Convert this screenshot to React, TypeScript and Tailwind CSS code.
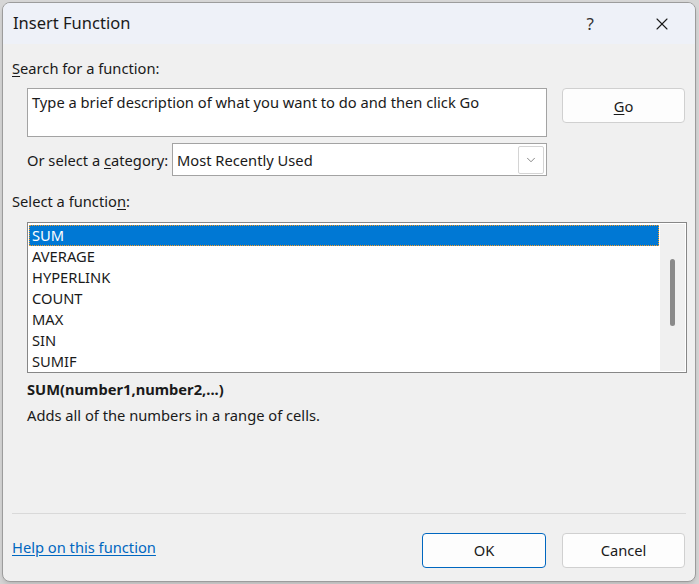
import { ChevronDown, X } from "lucide-react";

const functions = ["SUM", "AVERAGE", "HYPERLINK", "COUNT", "MAX", "SIN", "SUMIF"];

export default function App() {
  const selected = "SUM";

  return (
    <div className="w-[699px] h-[584px] bg-[#d6d6d6] p-[2px] font-['Noto_Sans',sans-serif] text-[14.7px] text-[#1a1a1a]">
      <div className="w-[694px] h-[580px] rounded-[8px] border border-[#9c9c9c] bg-[#f0f0f0] overflow-hidden flex flex-col shadow-md">
        {/* title bar */}
        <div className="h-[41px] bg-[#eef1f8] flex items-center pl-[10px] pr-[23px]">
          <span className="text-[16.5px] text-[#1a1a1a]">Insert Function</span>
          <div className="ml-auto flex items-center gap-[58px]">
            <span className="text-[17px] text-[#333]">?</span>
            <X size={20} strokeWidth={1.3} className="text-[#1a1a1a]" />
          </div>
        </div>

        {/* body */}
        <div className="flex-1 flex flex-col pl-[9px] pr-[8px]">
          <div className="mt-[14px] leading-[20px]">
            <span className="underline underline-offset-2">S</span>earch for a function:
          </div>

          <div className="mt-[10px] flex pl-[15px]">
            <div className="w-[520px] h-[49px] bg-white border border-[#a3a3a3] px-[4px] pt-[3px] leading-[20px]">
              Type a brief description of what you want to do and then click Go
            </div>
            <button className="ml-[15px] w-[123px] h-[35px] rounded-[4px] border border-[#d0d0d0] bg-[#fdfdfd] leading-[20px]">
              <span className="underline underline-offset-2">G</span>o
            </button>
          </div>

          <div className="mt-[6px] flex items-center pl-[15px]">
            <span className="w-[145px] leading-[20px]">
              Or select a <span className="underline underline-offset-2">c</span>ategory:
            </span>
            <div className="w-[375px] h-[33px] bg-white border border-[#a3a3a3] flex items-center pl-[4px] pr-[2px]">
              <span className="leading-[20px]">Most Recently Used</span>
              <div className="ml-auto w-[26px] h-[28px] rounded-[2px] border border-[#d4d4d4] flex items-center justify-center">
                <ChevronDown size={14} strokeWidth={1.2} className="text-[#555]" />
              </div>
            </div>
          </div>

          <div className="mt-[15px] leading-[20px]">
            Select a functio<span className="underline underline-offset-2">n</span>:
          </div>

          <div className="mt-[11px] ml-[15px] w-[660px] h-[151px] bg-white border border-[#878787] flex p-[1px]">
            <ul className="flex-1 pt-[1px]">
              {functions.map((f) => (
                <li
                  key={f}
                  className={
                    f === selected
                      ? "h-[21px] leading-[19px] px-[2px] mr-[1px] bg-[#0078d4] text-white border border-dotted border-[#f59a23]"
                      : "h-[21px] leading-[21px] px-[3px]"
                  }
                >
                  {f}
                </li>
              ))}
            </ul>
            <div className="w-[25px] h-full bg-[#f0f0f0] flex justify-center pt-[35px]">
              <div className="w-[5px] h-[67px] rounded-full bg-[#8a8a8a]" />
            </div>
          </div>

          <div className="mt-[6px] ml-[15px] leading-[20px] font-bold">SUM(number1,number2,...)</div>
          <div className="mt-[6px] ml-[15px] leading-[20px]">Adds all of the numbers in a range of cells.</div>

          <div className="mt-auto border-t border-[#d9d9d9] mr-[1px]" />

          <div className="h-[67px] flex items-start pt-[19px]">
            <a href="#" className="mt-[4px] text-[#0067c0] underline underline-offset-2 leading-[20px]">
              Help on this function
            </a>
            <div className="ml-auto flex gap-[16px] pr-[2px]">
              <button className="w-[124px] h-[35px] rounded-[4px] border border-[#0067c0] bg-[#fdfdfd]">OK</button>
              <button className="w-[123px] h-[35px] rounded-[4px] border border-[#d0d0d0] bg-[#fdfdfd]">Cancel</button>
            </div>
          </div>
        </div>
      </div>
    </div>
  );
}
